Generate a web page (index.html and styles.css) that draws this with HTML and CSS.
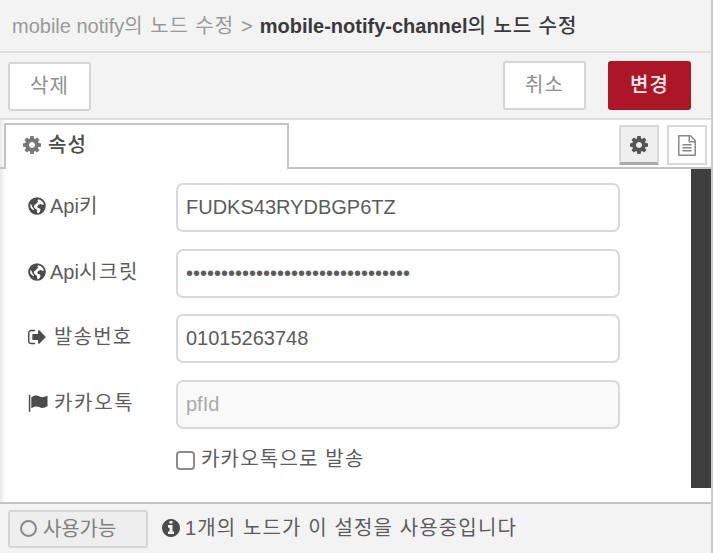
FILE: index.html
```html
<!DOCTYPE html>
<html lang="ko">
<head>
<meta charset="utf-8">
<title>노드 수정</title>
<link rel="stylesheet" href="styles.css">
</head>
<body>
<svg class="defs" aria-hidden="true">
  <symbol id="cog" viewBox="128 128 1536 1536"><path d="M1152 896q0-106-75-181t-181-75-181 75-75 181 75 181 181 75 181-75 75-181zm512-109v222q0 12-8 23t-20 13l-185 28q-19 54-39 91 35 50 107 138 10 12 10 25t-9 23q-27 37-99 108t-94 71q-12 0-26-9l-138-108q-44 23-91 38-16 136-29 186-7 28-36 28h-222q-14 0-24.500-8.500t-11.500-21.500l-28-184q-49-16-90-37l-141 107q-10 9-25 9-14 0-25-11-126-114-165-168-7-10-7-23 0-12 8-23 15-21 51-66.500t54-70.500q-27-50-41-99l-183-27q-13-2-21-12.500t-8-23.500v-222q0-12 8-23t19-13l186-28q14-46 39-92-40-57-107-138-10-12-10-24 0-10 9-23 26-36 98.500-107.500t94.500-71.500q13 0 26 10l138 107q44-23 91-38 16-136 29-186 7-28 36-28h222q14 0 24.500 8.500t11.500 21.500l28 184q49 16 90 37l142-107q9-9 24-9 13 0 25 10 129 119 165 170 7 8 7 22 0 12-8 23-15 21-51 66.500t-54 70.500q26 50 41 98l183 28q13 2 21 12.500t8 23.500z"/></symbol>
  <symbol id="signout" viewBox="64 192 1600 1408"><path d="M704 1440q0 4 1 20t.5 26.500-3 23.500-10 19.500-20.500 6.500h-320q-119 0-203.500-84.500t-84.500-203.500v-704q0-119 84.500-203.500t203.500-84.500h320q13 0 22.500 9.500t9.500 22.500q0 4 1 20t.5 26.500-3 23.500-10 19.500-20.500 6.500h-320q-66 0-113 47t-47 113v704q0 66 47 113t113 47h312l11.500 1 11.500 3 8 5.500 7 9 2 13.500zm928-544q0 26-19 45l-544 544q-19 19-45 19t-45-19-19-45v-288h-448q-26 0-45-19t-19-45v-384q0-26 19-45t45-19h448v-288q0-26 19-45t45-19 45 19l544 544q19 19 19 45z"/></symbol>
  <symbol id="info" viewBox="128 128 1536 1536"><path d="M1152 1376v-160q0-14-9-23t-23-9h-96v-512q0-14-9-23t-23-9h-320q-14 0-23 9t-9 23v160q0 14 9 23t23 9h96v320h-96q-14 0-23 9t-9 23v160q0 14 9 23t23 9h448q14 0 23-9t9-23zm-128-896v-160q0-14-9-23t-23-9h-192q-14 0-23 9t-9 23v160q0 14 9 23t23 9h192q14 0 23-9t9-23zm640 416q0 209-103 385.500t-279.500 279.500-385.500 103-385.500-103-279.500-279.500-103-385.500 103-385.500 279.500-279.500 385.500-103 385.500 103 279.500 279.500 103 385.500z"/></symbol>
  <symbol id="file" viewBox="128 0 1536 1792"><path d="M1596 380q28 28 48 76t20 88v1152q0 40-28 68t-68 28h-1344q-40 0-68-28t-28-68v-1600q0-40 28-68t68-28h896q40 0 88 20t76 48zm-444-244v376h376q-10-29-22-41l-313-313q-12-12-41-22zm384 1528v-1024h-416q-40 0-68-28t-28-68v-416h-768v1536h1280zm-1024-864q0-14 9-23t23-9h704q14 0 23 9t9 23v64q0 14-9 23t-23 9h-704q-14 0-23-9t-9-23v-64zm736 224q14 0 23 9t9 23v64q0 14-9 23t-23 9h-704q-14 0-23-9t-9-23v-64q0-14 9-23t23-9h704zm0 256q14 0 23 9t9 23v64q0 14-9 23t-23 9h-704q-14 0-23-9t-9-23v-64q0-14 9-23t23-9h704z"/></symbol>
  <symbol id="globe" viewBox="0 0 18 18"><path fill-rule="evenodd" d="M9 .2a8.800 8.800 0 1 0 0 17.600A8.800 8.800 0 0 0 9 .2zM10.200 2.300l2.300.7 2.300 2 1.200 2.400-1.500.3-1.700-.6-2.200.6-1.300 1.500.4 1.600 1.700.5 1 .9-.1 1.600-1.300 2.300-1.500.2-.5-1.700.1-1.600-1.700-1.300-1.600-1.800.4-1.700 1.500-1 1.400-1.400 1.200-1.200-.9-.9zM2.300 6.600l1.400 1.700.6 1.700 1.300 1.400.3 1.900-1.500-.7L2.400 10.500z"/></symbol>
  <symbol id="flag" viewBox="0 0 20 18"><path d="M.8.700h1.500v17H.8zM3.300 3.200C7 .6 9.200 1.300 11.800 2.600c2.300 1.100 4.600.4 7.700-1.100v10.800c-3.500 1.800-5.500 2.100-7.800 1-2.700-1.300-4.900-1.300-8.400.9z"/></symbol>
</svg>
<main class="panel">
  <header class="crumbs"><span>mobile notify<span class="ko">의 노드 수정</span></span><span class="sep">&gt;</span><b>mobile-notify-channel<span class="ko">의 노드 수정</span></b></header>
  <div class="actions">
    <button class="btn">삭제</button>
    <button class="btn cancel">취소</button>
    <button class="btn primary">변경</button>
  </div>
  <nav class="tabs">
    <div class="lead"></div>
    <div class="tab"><svg class="ico"><use href="#cog"/></svg><span>속성</span></div>
    <div class="tools">
      <button class="tool active"><svg class="ico"><use href="#cog"/></svg></button>
      <button class="tool"><svg class="doc"><use href="#file"/></svg></button>
    </div>
  </nav>
  <section class="content">
    <form class="form">
      <label class="row"><span class="label"><svg class="ico"><use href="#globe"/></svg><span>Api<span class="ko">키</span></span></span><input class="field" type="text" value="FUDKS43RYDBGP6TZ"></label>
      <label class="row"><span class="label"><svg class="ico"><use href="#globe"/></svg><span>Api<span class="ko loose">시크릿</span></span></span><input class="field" type="password" value="12345678901234567890123456789012"></label>
      <label class="row"><span class="label wide"><svg class="ico"><use href="#signout"/></svg><span class="ko">발송번호</span></span><input class="field" type="text" value="01015263748"></label>
      <label class="row"><span class="label wide"><svg class="flag"><use href="#flag"/></svg><span class="ko loose">카카오톡</span></span><input class="field" type="text" placeholder="pfId" disabled></label>
      <label class="check"><input class="box" type="checkbox"><span class="ko">카카오톡으로 발송</span></label>
    </form>
    <div class="scroll"></div>
  </section>
  <footer class="foot">
    <button class="state"><span class="ring"></span><span>사용가능</span></button>
    <svg class="ico"><use href="#info"/></svg>
    <span class="ko usage">1개의 노드가 이 설정을 사용중입니다</span>
  </footer>
</main>
</body>
</html>
```
FILE: styles.css
```css
* { box-sizing: border-box; }
body {
  margin: 0;
  height: 553px;
  overflow: hidden;
  background: #fff;
  color: #5c5c5c;
  font: 20px/24px "Liberation Sans", "Noto Sans CJK KR", sans-serif;
}
.defs { position: absolute; width: 0; height: 0; }
svg { fill: currentColor; flex: none; }
button, input { font: inherit; color: inherit; margin: 0; }
.ko { letter-spacing: 1.2px; }
.loose { letter-spacing: 1.7px; }
.ico { width: 18px; height: 18px; }
.label svg, .foot > svg { color: #4c4c4c; }
.panel {
  width: 713px;
  height: 553px;
  display: flex;
  flex-direction: column;
  border-right: 2px solid #ccc;
  box-shadow: inset 4px 0 4px -2px #e4e4e4;
}
.crumbs {
  height: 53px;
  padding: 14px 0 0 12px;
  display: flex;
  background: #f3f3f3;
  border-bottom: 2px solid #e0e0e0;
  color: #999;
  white-space: nowrap;
}
.crumbs .ko { letter-spacing: .95px; }
.sep { margin: 0 7px; }
.crumbs b { color: #3a3a3a; }
.crumbs b .ko { font-weight: 500; }
.actions {
  height: 67px;
  padding: 8px 20px 0 8px;
  display: flex;
  background: #f3f3f3;
  border-bottom: 2px solid #ddd;
}
.btn {
  width: 83px;
  height: 49px;
  margin-top: 1px;
  padding: 0 0 1px;
  border: 2px solid #d5d5d5;
  border-radius: 3px;
  background: #fff;
  color: #909090;
  letter-spacing: 1.2px;
}
.cancel { margin: 0 22px 0 auto; }
.primary { margin-top: 0; background: #ad1625; border-color: #ad1625; color: #eee; font-weight: 500; }
.tabs { height: 49px; display: flex; }
.lead { width: 4px; border-bottom: 2px solid #c4c4c4; }
.tab {
  width: 285px;
  margin-top: 3px;
  padding: 0 0 5px 17px;
  display: flex;
  align-items: center;
  gap: 7px;
  border: 2px solid #c4c4c4;
  border-bottom: 0;
  font-weight: 500;
  letter-spacing: 1.2px;
  color: #4c4c4c;
}
.tab .ico { color: #777; }
.tools {
  flex: 1;
  display: flex;
  justify-content: flex-end;
  gap: 8px;
  padding: 5px 4px 0 0;
  border-bottom: 2px solid #c4c4c4;
}
.tool {
  width: 40px;
  height: 40px;
  padding: 0;
  display: grid;
  place-items: center;
  background: #fff;
  border: 2px solid #d8d8d8;
  color: #888;
}
.active { background: #efefef; border-bottom: 3px solid #aaa; color: #555; }
.doc { width: 18px; height: 21px; }
.content { height: 333px; display: flex; justify-content: space-between; }
.form { padding: 14px 0 0 28px; }
.row { display: flex; height: 65.500px; }
.label { width: 148px; height: 48px; display: flex; align-items: center; gap: 4px; padding-bottom: 2px; }
.wide { gap: 8px; }
.flag { width: 20px; height: 18px; margin-right: -2px; }
.field {
  width: 444px;
  height: 49px;
  padding: 0 8px;
  border: 2px solid #d9d9d9;
  border-radius: 7px;
  background: #fff;
}
.field:disabled { background: #f9f9f9; }
.field::placeholder { color: #aaa; }
.check { display: flex; align-items: center; gap: 6px; margin: -1px 0 0 148px; height: 30px; }
.box {
  appearance: none;
  width: 19px;
  height: 19px;
  margin-top: 2px;
  border: 2px solid #8c8c8c;
  border-radius: 4px;
}
.scroll { width: 20px; height: 319px; background: #3f3f3f; }
.foot {
  height: 51px;
  padding: 0 0 0 8px;
  display: flex;
  align-items: center;
  background: #f3f3f3;
  border-top: 2px solid #c4c4c4;
}
.foot > svg { margin-top: -2px; }
.state {
  width: 140px;
  height: 38px;
  margin: 0 14px 0 0;
  padding: 0 0 0 10px;
  display: flex;
  align-items: center;
  gap: 6px;
  background: #eee;
  border: 2px solid #d5d5d5;
  border-radius: 3px;
  color: #808080;
  letter-spacing: -.1px;
}
.ring { width: 17px; height: 17px; border: 2px solid #888; border-radius: 50%; }
.usage { margin: -2px 0 0 5px; letter-spacing: 1.130px; }
```
